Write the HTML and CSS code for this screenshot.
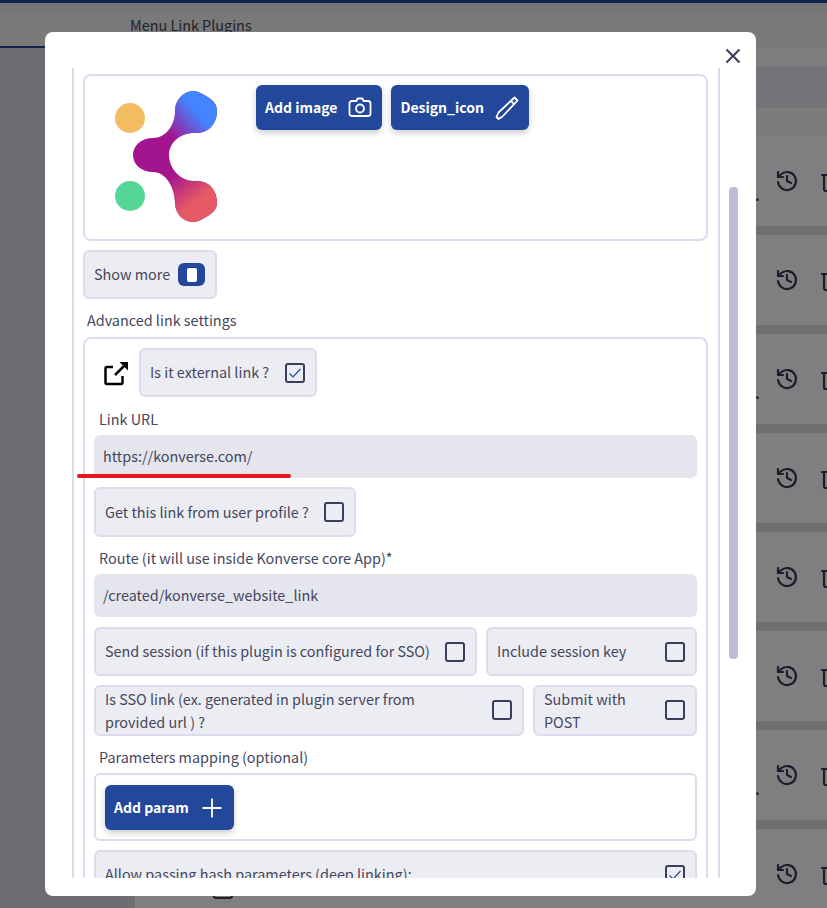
FILE: index.html
```html
<!DOCTYPE html>
<html lang="en">
<head>
    <meta charset="UTF-8">
    <title>Menu Link Plugins</title>
    <link rel="stylesheet" href="styles.css">
</head>
<body>
    <div class="tabs">
        <div class="tab tab-active"></div>
        <div class="tab">Menu Link Plugins</div>
    </div>
    <div class="page">
        <div class="sidebar"></div>
        <div class="content">
            <div class="band band-light"></div>
            <div class="band band-head"></div>
            <div class="band band-sub"></div>
            <div class="rows">
                <div class="row"><span class="row-more">.</span><svg class="row-icon" viewBox="0 0 24 24"><path d="M3 3v5h5"/><path d="M3.05 13A9 9 0 1 0 6 5.3L3 8"/><path d="M12 7v5l4 2"/></svg><svg class="row-icon" viewBox="0 0 24 24"><path d="M3 6h18M19 6v14a2 2 0 0 1-2 2H7a2 2 0 0 1-2-2V6"/></svg></div>
                <div class="row"><span class="row-more"></span><svg class="row-icon" viewBox="0 0 24 24"><path d="M3 3v5h5"/><path d="M3.05 13A9 9 0 1 0 6 5.3L3 8"/><path d="M12 7v5l4 2"/></svg><svg class="row-icon" viewBox="0 0 24 24"><path d="M3 6h18M19 6v14a2 2 0 0 1-2 2H7a2 2 0 0 1-2-2V6"/></svg></div>
                <div class="row"><span class="row-more">.</span><svg class="row-icon" viewBox="0 0 24 24"><path d="M3 3v5h5"/><path d="M3.05 13A9 9 0 1 0 6 5.3L3 8"/><path d="M12 7v5l4 2"/></svg><svg class="row-icon" viewBox="0 0 24 24"><path d="M3 6h18M19 6v14a2 2 0 0 1-2 2H7a2 2 0 0 1-2-2V6"/></svg></div>
                <div class="row"><span class="row-more"></span><svg class="row-icon" viewBox="0 0 24 24"><path d="M3 3v5h5"/><path d="M3.05 13A9 9 0 1 0 6 5.3L3 8"/><path d="M12 7v5l4 2"/></svg><svg class="row-icon" viewBox="0 0 24 24"><path d="M3 6h18M19 6v14a2 2 0 0 1-2 2H7a2 2 0 0 1-2-2V6"/></svg></div>
                <div class="row"><span class="row-more"></span><svg class="row-icon" viewBox="0 0 24 24"><path d="M3 3v5h5"/><path d="M3.05 13A9 9 0 1 0 6 5.3L3 8"/><path d="M12 7v5l4 2"/></svg><svg class="row-icon" viewBox="0 0 24 24"><path d="M3 6h18M19 6v14a2 2 0 0 1-2 2H7a2 2 0 0 1-2-2V6"/></svg></div>
                <div class="row"><span class="row-more"></span><svg class="row-icon" viewBox="0 0 24 24"><path d="M3 3v5h5"/><path d="M3.05 13A9 9 0 1 0 6 5.3L3 8"/><path d="M12 7v5l4 2"/></svg><svg class="row-icon" viewBox="0 0 24 24"><path d="M3 6h18M19 6v14a2 2 0 0 1-2 2H7a2 2 0 0 1-2-2V6"/></svg></div>
                <div class="row"><span class="row-more">.</span><svg class="row-icon" viewBox="0 0 24 24"><path d="M3 3v5h5"/><path d="M3.05 13A9 9 0 1 0 6 5.3L3 8"/><path d="M12 7v5l4 2"/></svg><svg class="row-icon" viewBox="0 0 24 24"><path d="M3 6h18M19 6v14a2 2 0 0 1-2 2H7a2 2 0 0 1-2-2V6"/></svg></div>
                <div class="row"><span class="row-mark"></span><span class="row-more"></span><svg class="row-icon" viewBox="0 0 24 24"><path d="M3 3v5h5"/><path d="M3.05 13A9 9 0 1 0 6 5.3L3 8"/><path d="M12 7v5l4 2"/></svg><svg class="row-icon" viewBox="0 0 24 24"><path d="M3 6h18M19 6v14a2 2 0 0 1-2 2H7a2 2 0 0 1-2-2V6"/></svg></div>
            </div>
        </div>
    </div>

    <div class="overlay"></div>

    <div class="modal">
        <svg class="close-icon" viewBox="0 0 16 16"><path d="M1.5 1.5l13 13M14.5 1.5l-13 13"/></svg>
        <div class="scroll-thumb"></div>
        <div class="red-mark"></div>

        <div class="modal-body">
            <div class="image-box">
                <svg class="logo" viewBox="110 88 110 138">
                    <defs>
                        <linearGradient id="blob-blue" gradientUnits="userSpaceOnUse" x1="204" y1="110" x2="172" y2="138">
                            <stop offset="0.15" stop-color="#4285ff"/>
                            <stop offset="1" stop-color="#4285ff" stop-opacity="0"/>
                        </linearGradient>
                        <linearGradient id="blob-red" gradientUnits="userSpaceOnUse" x1="204" y1="206" x2="176" y2="172">
                            <stop offset="0.2" stop-color="#e55a64"/>
                            <stop offset="1" stop-color="#e55a64" stop-opacity="0"/>
                        </linearGradient>
                    </defs>
                    <circle cx="130" cy="118" r="15" fill="#f4bc60"/>
                    <circle cx="130" cy="196" r="15" fill="#56d696"/>
                    <path fill="#a3148f" d="M193 91C197 91 201 93 206 96C213 100 217 104 217 111C217 123 209 133 197 133L194 133C180 133 169 143 169 155C169 168 180 181 194 181L197 181C209 181 217 190 217 203C217 209 213 213 206 217C201 220 197 222 193 222C184 222 175 214 175 203C175 188 166 172 153 172C142 172 133 165 133 155C133 145 142 138 153 138C166 138 175 125 175 111C175 100 184 91 193 91Z"/>
                    <path fill="url(#blob-blue)" d="M193 91C197 91 201 93 206 96C213 100 217 104 217 111C217 123 209 133 197 133L194 133C180 133 169 143 169 155L133 155C133 145 142 138 153 138C166 138 175 125 175 111C175 100 184 91 193 91Z"/>
                    <path fill="url(#blob-red)" d="M169 155C169 168 180 181 194 181L197 181C209 181 217 190 217 203C217 209 213 213 206 217C201 220 197 222 193 222C184 222 175 214 175 203C175 188 166 172 153 172C142 172 133 165 133 155Z"/>
                </svg>
                <div class="image-actions">
                    <button class="btn">Add image
                        <svg class="btn-icon" viewBox="0 0 24 24"><path d="M8.5 5l1-2.5h5l1 2.5H20a2.5 2.5 0 0 1 2.5 2.5v10A2.5 2.5 0 0 1 20 20H4a2.5 2.5 0 0 1-2.5-2.5v-10A2.5 2.5 0 0 1 4 5z"/><circle cx="12" cy="12.5" r="4"/></svg>
                    </button>
                    <button class="btn">Design_icon
                        <svg class="btn-icon" viewBox="0 0 24 24"><path d="M19.500 1.500l3 3L7.500 20.500 3.500 23 1.500 21l2-4.500z"/><path d="M16 5l3 3"/></svg>
                    </button>
                </div>
            </div>

            <div class="check-field check-field-short">
                <span>Show more</span>
                <span class="toggle"><span class="toggle-knob"></span></span>
            </div>

            <div class="field-label field-label-outer">Advanced link settings</div>
            <div class="group">
                <div class="external-row">
                    <svg class="external-icon" viewBox="0 0 24 24"><path class="external-frame" d="M9 6H3a1.500 1.500 0 0 0-1.500 1.500v14A1.500 1.500 0 0 0 3 23h14a1.500 1.500 0 0 0 1.500-1.500V15"/><path class="external-frame" d="M11 14L20 5"/><path d="M15.500 1H24v8.500z"/></svg>
                    <label class="check-field">
                        <span>Is it external link ?</span>
                        <span class="checkbox checkbox-on"><svg viewBox="0 0 16 16"><path d="M2.500 8.500l3.500 3.500 7.500-8"/></svg></span>
                    </label>
                </div>

                <div class="field-label">Link URL</div>
                <div class="text-input">https://konverse.com/</div>

                <div class="check-row">
                    <label class="check-field">
                        <span>Get this link from user profile ?</span>
                        <span class="checkbox"></span>
                    </label>
                </div>

                <div class="field-label">Route (it will use inside Konverse core App)*</div>
                <div class="text-input">/created/konverse_website_link</div>

                <div class="check-grid check-grid-auto">
                    <label class="check-field">
                        <span>Send session (if this plugin is configured for SSO)</span>
                        <span class="checkbox"></span>
                    </label>
                    <label class="check-field">
                        <span>Include session key</span>
                        <span class="checkbox"></span>
                    </label>
                </div>
                <div class="check-grid check-grid-sso">
                    <label class="check-field check-field-wrap">
                        <span>Is SSO link (ex. generated in plugin server from<br>provided url ) ?</span>
                        <span class="checkbox"></span>
                    </label>
                    <label class="check-field check-field-wrap">
                        <span>Submit with POST</span>
                        <span class="checkbox"></span>
                    </label>
                </div>

                <div class="field-label">Parameters mapping (optional)</div>
                <div class="params-box">
                    <button class="btn">Add param
                        <svg class="btn-icon" viewBox="0 0 24 24"><path d="M12 2.500v19M2.500 12h19"/></svg>
                    </button>
                </div>

                <label class="check-field check-field-last">
                    <span>Allow passing hash parameters (deep linking):</span>
                    <span class="checkbox checkbox-on"><svg viewBox="0 0 16 16"><path d="M2.500 8.500l3.500 3.500 7.500-8"/></svg></span>
                </label>
            </div>
        </div>
    </div>
</body>
</html>
```

FILE: styles.css
```css
* {
    margin: 0;
    padding: 0;
    box-sizing: border-box;
}
html, body {
    height: 100%;
    overflow: hidden;
}
body {
    display: flex;
    flex-direction: column;
    font-family: "Noto Sans CJK KR", "Noto Sans", sans-serif;
    font-size: 14.4px;
    line-height: 23px;
    color: #45465e;
    background-color: #dedede;
}

/* page behind the dialog */
.tabs {
    display: flex;
    height: 48px;
    flex-shrink: 0;
    border-top: 3px solid #24479c;
    background: linear-gradient(#e6e6e6, #f2f2f2 12px);
}
.tab {
    padding: 10px 0 0 10px;
}
.tab-active {
    width: 120px;
    border-bottom: 2px solid #24479c;
}
.page {
    display: flex;
    flex: 1;
}
.sidebar {
    width: 126px;
    background-color: #d8d8e6;
}
.content {
    flex: 1;
    padding-left: 9px;
}
.band-light {
    height: 18px;
    background-color: #fdfdfd;
}
.band-head {
    height: 42px;
    background-color: #ebebf3;
}
.band-sub {
    height: 28px;
    background-color: #f8f8f8;
}
.rows {
    display: flex;
    flex-direction: column;
    gap: 9px;
}
.row {
    display: flex;
    align-items: center;
    height: 90px;
    background-color: white;
}
.row-mark {
    align-self: flex-end;
    width: 20px;
    height: 20px;
    margin: 0 0 20px 78px;
    border: 2px solid #45465e;
    border-radius: 3px;
}
.row-more {
    width: 20px;
    margin-left: auto;
    margin-top: 26px;
    font-weight: 700;
}
.row-icon {
    width: 24px;
    height: 24px;
    flex-shrink: 0;
    margin-right: 20px;
    fill: none;
    stroke: #3a3a5a;
    stroke-width: 2.2;
    stroke-linecap: round;
    stroke-linejoin: round;
}
.row-icon:last-child {
    margin-right: -16px;
}
.overlay {
    position: fixed;
    inset: 0;
    background-color: rgba(0, 0, 0, 0.5);
}

/* dialog */
.modal {
    position: fixed;
    left: 45px;
    top: 32px;
    width: 711px;
    height: 864px;
    padding: 36px 36px 18px 27px;
    background-color: white;
    border-radius: 8px;
}
.close-icon {
    position: absolute;
    left: 680px;
    top: 16px;
    width: 16px;
    height: 16px;
    fill: none;
    stroke: #3a3b55;
    stroke-width: 2;
}
.scroll-thumb {
    position: absolute;
    left: 684px;
    top: 155px;
    width: 9px;
    height: 472px;
    background-color: #bcbdd9;
    border-radius: 4px;
}
.red-mark {
    position: absolute;
    left: 32px;
    top: 442px;
    width: 214px;
    height: 4px;
    background-color: #e8141e;
    border-radius: 2px;
    z-index: 2;
}
.modal-body {
    height: 100%;
    padding: 6px 10px 0 9px;
    overflow: hidden;
    border-left: 2px solid #dcdcec;
    border-right: 2px solid #dcdcec;
}
.image-box {
    display: flex;
    align-items: flex-start;
    height: 167px;
    padding: 9px 0 0 25px;
    border: 2px solid #dcdcec;
    border-radius: 8px;
}
.logo {
    width: 110px;
    height: 138px;
    margin-top: 3px;
}
.image-actions {
    display: flex;
    gap: 9px;
    margin-left: 36px;
}
.btn {
    display: inline-flex;
    align-items: center;
    gap: 11px;
    height: 45px;
    padding: 0 10px 2px 9px;
    border: none;
    border-radius: 6px;
    background-color: #23479b;
    color: white;
    font-family: inherit;
    font-size: 14px;
    font-weight: 700;
    box-shadow: 0 3px 6px rgba(0, 0, 0, 0.2);
}
.btn-icon {
    width: 24px;
    height: 24px;
    margin-top: 2px;
    fill: none;
    stroke: white;
    stroke-width: 1.8;
    stroke-linejoin: round;
}
.check-field {
    display: inline-flex;
    align-items: center;
    gap: 15px;
    min-height: 49px;
    padding: 0 10px 0 9px;
    background-color: #ecedf3;
    border: 2px solid #dcdcec;
    border-radius: 6px;
}
.check-field > span:first-child {
    margin-bottom: 2px;
}
.check-field-short {
    display: flex;
    width: 134px;
    gap: 8px;
    margin-top: 9px;
    white-space: nowrap;
}
.check-field-wrap {
    padding-bottom: 1px;
    justify-content: space-between;
}
.check-field-wrap > span:first-child {
    margin-bottom: 0;
}
.check-field-last {
    display: flex;
    justify-content: space-between;
    margin-top: 9px;
}
.toggle {
    display: flex;
    align-items: center;
    justify-content: center;
    width: 27px;
    height: 23px;
    flex-shrink: 0;
    background-color: #23479b;
    border-radius: 6px;
}
.toggle-knob {
    width: 10px;
    height: 14px;
    background-color: white;
    border-radius: 2px;
}
.checkbox {
    display: block;
    width: 20px;
    height: 20px;
    flex-shrink: 0;
    border: 2px solid #3b3d5a;
    border-radius: 3px;
}
.checkbox svg {
    display: block;
    width: 16px;
    height: 16px;
    fill: none;
    stroke: #23479b;
    stroke-width: 1.2;
}
.field-label {
    margin: 10px 0 5px 5px;
    line-height: 22px;
}
.field-label-outer {
    margin: 10px 0 6px 4px;
}
.group {
    padding: 9px 9px 0;
    height: 600px;
    border: 2px solid #dcdcec;
    border-radius: 8px;
}
.external-row {
    display: flex;
    align-items: center;
    gap: 11px;
    padding-left: 10px;
    padding-bottom: 1px;
}
.external-row .check-field {
    gap: 16px;
}
.external-icon {
    width: 24px;
    height: 26px;
    fill: black;
}
.external-frame {
    fill: none;
    stroke: black;
    stroke-width: 2.5;
}
.text-input {
    height: 43px;
    padding: 9px 9px;
    background-color: #e4e5ed;
    border-radius: 6px;
}
.check-row {
    margin-top: 9px;
}
.check-row .check-field {
    height: 50px;
}
.check-grid {
    display: grid;
    gap: 9px;
    margin-top: 9px;
}
.check-grid-auto {
    margin-top: 10px;
    grid-template-columns: auto 1fr;
}
.check-grid-auto .check-field:last-child {
    justify-content: space-between;
}
.check-grid-sso {
    grid-template-columns: 1fr 164px;
}
.params-box {
    height: 68px;
    padding: 10px 9px;
    background-color: white;
    border: 2px solid #dcdcec;
    border-radius: 6px;
}
```
